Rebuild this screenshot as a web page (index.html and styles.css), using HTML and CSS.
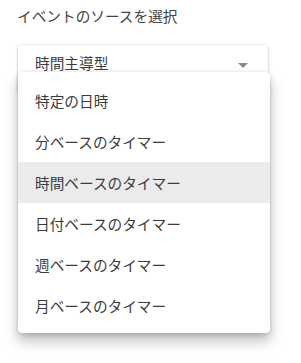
FILE: index.html
```html
<!DOCTYPE html>
<html lang="ja">
<head>
<meta charset="utf-8">
<link rel="stylesheet" href="styles.css">
</head>
<body>
<div class="page">
  <div class="label">イベントのソースを選択</div>
  <div class="field">
    <div class="select">
      <span class="value">時間主導型</span>
      <span class="arrow"></span>
    </div>
    <div class="menu">
      <div class="item">特定の日時</div>
      <div class="item">分ベースのタイマー</div>
      <div class="item active">時間ベースのタイマー</div>
      <div class="item">日付ベースのタイマー</div>
      <div class="item">週ベースのタイマー</div>
      <div class="item">月ベースのタイマー</div>
    </div>
  </div>
</div>
</body>
</html>
```
FILE: styles.css
```css
html, body {
  margin: 0;
  padding: 0;
  background: #fff;
  min-height: 100vh;
}
body {
  font-family: "Noto Sans CJK JP", "Noto Sans", sans-serif;
  color: #3c3c3c;
}
.page {
  padding: 6px 0 0 17px;
  min-height: 363px;
  box-sizing: border-box;
}
.label {
  font-size: 14.67px;
  line-height: 20px;
  color: #444;
}
.field {
  position: relative;
  margin-top: 19px;
  margin-left: 1px;
  width: 250px;
}
.select {
  height: 48px;
  border-radius: 4px;
  background: #fff;
  box-shadow: 0 1px 3px rgba(0,0,0,0.25), 0 0 2px rgba(0,0,0,0.08);
  display: flex;
  align-items: flex-start;
  justify-content: space-between;
  padding: 8px 20px 0 17px;
  box-sizing: border-box;
}
.value {
  font-size: 14.67px;
  line-height: 20px;
}
.arrow {
  margin-top: 10px;
  width: 0;
  height: 0;
  border-left: 5px solid transparent;
  border-right: 5px solid transparent;
  border-top: 5px solid #8a8a8a;
}
.menu {
  position: absolute;
  left: 0;
  top: 27px;
  width: 252px;
  padding: 8px 0 7px;
  background: #fff;
  border-radius: 4px;
  box-shadow: 0 8px 14px rgba(0,0,0,0.26), 0 2px 5px rgba(0,0,0,0.12), 0 0 2px rgba(0,0,0,0.08);
}
.item {
  height: 41px;
  line-height: 41px;
  padding-left: 17px;
  font-size: 14.67px;
  color: #3c3c3c;
}
.item.active {
  background: #ebebeb;
}
```
